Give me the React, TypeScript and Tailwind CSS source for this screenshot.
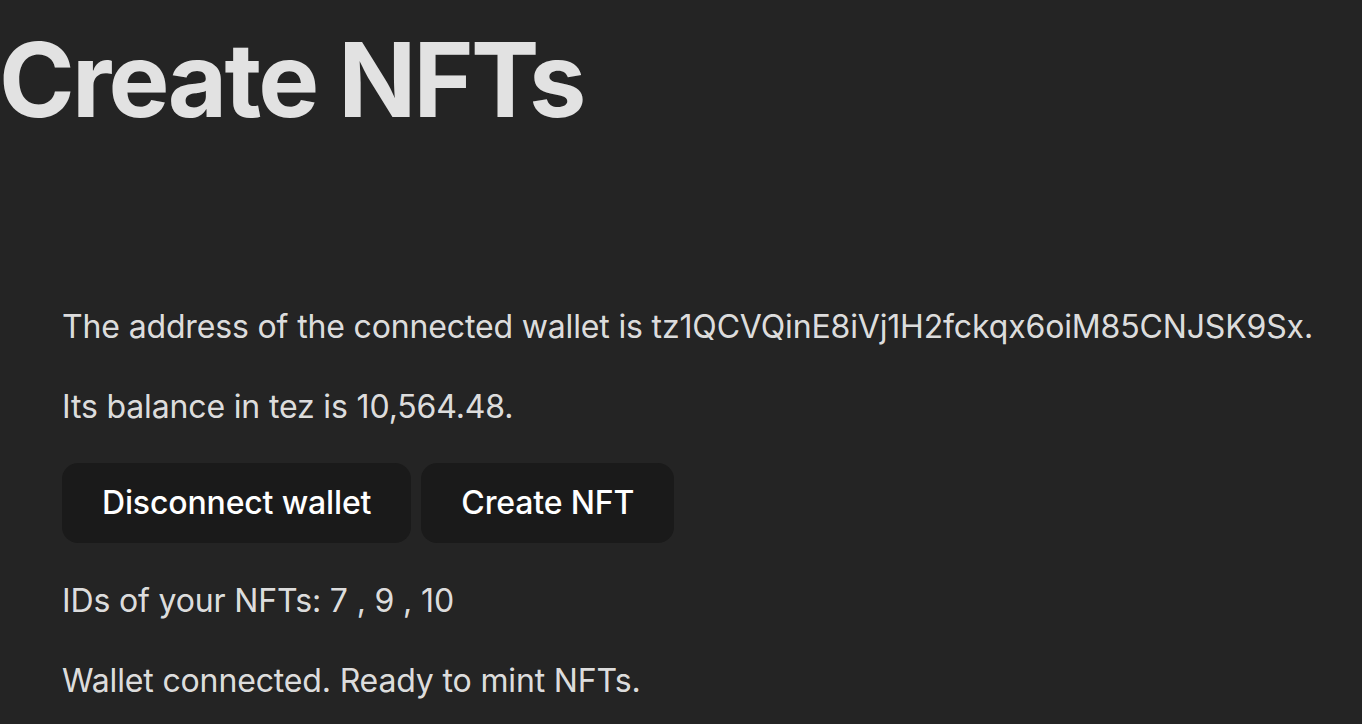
import React from "react";

export default function App() {
  return (
    <div className="min-h-screen w-full overflow-hidden bg-[#242424] text-[rgba(255,255,255,0.87)] font-['Inter',sans-serif] antialiased">
      <h1 className="m-0 pt-[24px] -ml-[1px] text-[102.4px] leading-[1.1] font-bold tracking-[-2.7px] whitespace-nowrap">
        Create NFTs
      </h1>
      <div className="pl-[62px] pt-[166px] text-[32px] leading-[1.5] font-normal tracking-[-0.15px]">
        <p className="m-0 whitespace-nowrap">
          The address of the connected wallet is tz1QCVQinE8iVj1H2fckqx6oiM85CNJSK9Sx.
        </p>
        <p className="mt-[32px] mb-0">Its balance in tez is 10,564.48.</p>
        <div className="mt-[32px] flex gap-[10px]">
          <button className="rounded-[16px] border-2 border-transparent bg-[#1a1a1a] px-[38px] py-[19px] text-[32px] leading-[1.21] font-medium text-white">
            Disconnect wallet
          </button>
          <button className="rounded-[16px] border-2 border-transparent bg-[#1a1a1a] px-[38px] py-[19px] text-[32px] leading-[1.21] font-medium text-white">
            Create NFT
          </button>
        </div>
        <p className="mt-[34px] mb-0">IDs of your NFTs: 7 , 9 , 10</p>
        <p className="mt-[32px] mb-0">Wallet connected. Ready to mint NFTs.</p>
      </div>
    </div>
  );
}
